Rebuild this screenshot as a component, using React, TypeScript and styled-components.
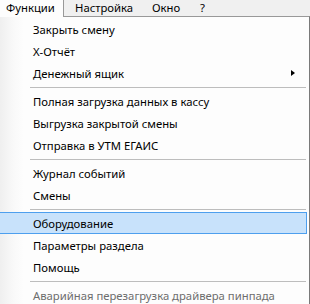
import React from 'react'
import styled, { createGlobalStyle } from 'styled-components'

const GlobalStyle = createGlobalStyle`
    html, body {
        margin: 0;
        padding: 0;
        background: #f0f0f0;
        overflow: hidden;
    }
    body {
        font-family: 'Noto Sans', 'Liberation Sans', sans-serif;
        font-size: 11.3px;
        color: #000;
    }
`

const Screen = styled.div`
    width: 310px;
    height: 304px;
    overflow: hidden;
    display: flex;
    flex-direction: column;
`

const MenuBar = styled.div`
    display: flex;
    align-items: flex-start;
    height: 16px;
    background: #f0f0f0;
    flex-shrink: 0;
`

const BarItem = styled.div<{ $active?: boolean; $width: number; $pad: number }>`
    position: relative;
    z-index: 1;
    width: ${({ $width }) => $width}px;
    box-sizing: border-box;
    padding-left: ${({ $pad }) => $pad}px;
    height: ${({ $active }) => ($active ? 17 : 16)}px;
    line-height: 15px;
    white-space: nowrap;
    background: ${({ $active }) => ($active ? '#fdfdfd' : 'transparent')};
    border-right: ${({ $active }) => ($active ? '1px solid #999' : 'none')};
`

const Dropdown = styled.div`
    flex: 1;
    width: 310px;
    box-sizing: border-box;
    border-top: 1px solid #999;
    border-right: 1px solid #7a7a7a;
    padding: 1px 2px 0 0;
    background: linear-gradient(90deg, #efefef 0px, #f9f9f9 14px, #fdfdfd 24px);
`

const Item = styled.div<{ $hover?: boolean; $disabled?: boolean }>`
    position: relative;
    height: 22px;
    box-sizing: border-box;
    padding-left: 33px;
    display: flex;
    align-items: center;
    white-space: nowrap;
    color: ${({ $disabled }) => ($disabled ? '#6d6d6d' : '#000')};
    background: ${({ $hover }) => ($hover ? '#c8e2fb' : 'transparent')};
    border: 1px solid ${({ $hover }) => ($hover ? '#4d9fee' : 'transparent')};
    border-left: none;
`

const SubArrow = styled.span`
    position: absolute;
    right: 11px;
    top: 7px;
    width: 0;
    height: 0;
    border-top: 3.5px solid transparent;
    border-bottom: 3.5px solid transparent;
    border-left: 4px solid #000;
`

const Separator = styled.div`
    height: 6px;
    margin: 0 1px 0 30px;
    display: flex;
    align-items: center;

    &::after {
        content: '';
        flex: 1;
        height: 1px;
        background: #bdbdbd;
    }
`

type Entry =
    | { kind: 'item'; label: string; sub?: boolean; hover?: boolean; disabled?: boolean }
    | { kind: 'sep' }

const entries: Entry[] = [
    { kind: 'item', label: 'Закрыть смену' },
    { kind: 'item', label: 'X-Отчёт' },
    { kind: 'item', label: 'Денежный ящик', sub: true },
    { kind: 'sep' },
    { kind: 'item', label: 'Полная загрузка данных в кассу' },
    { kind: 'item', label: 'Выгрузка закрытой смены' },
    { kind: 'item', label: 'Отправка в УТМ ЕГАИС' },
    { kind: 'sep' },
    { kind: 'item', label: 'Журнал событий' },
    { kind: 'item', label: 'Смены' },
    { kind: 'sep' },
    { kind: 'item', label: 'Оборудование', hover: true },
    { kind: 'item', label: 'Параметры раздела' },
    { kind: 'item', label: 'Помощь' },
    { kind: 'sep' },
    { kind: 'item', label: 'Аварийная перезагрузка драйвера пинпада', disabled: true },
]

export default function App() {
    return (
        <>
            <GlobalStyle />
            <Screen>
                <MenuBar>
                    <BarItem $active $width={64} $pad={6}>Функции</BarItem>
                    <BarItem $width={81} $pad={11}>Настройка</BarItem>
                    <BarItem $width={48} $pad={7}>Окно</BarItem>
                    <BarItem $width={30} $pad={7}>?</BarItem>
                </MenuBar>
                <Dropdown>
                    {entries.map((e, i) =>
                        e.kind === 'sep' ? (
                            <Separator key={i} />
                        ) : (
                            <Item key={i} $hover={e.hover} $disabled={e.disabled}>
                                {e.label}
                                {e.sub && <SubArrow />}
                            </Item>
                        )
                    )}
                </Dropdown>
            </Screen>
        </>
    )
}
